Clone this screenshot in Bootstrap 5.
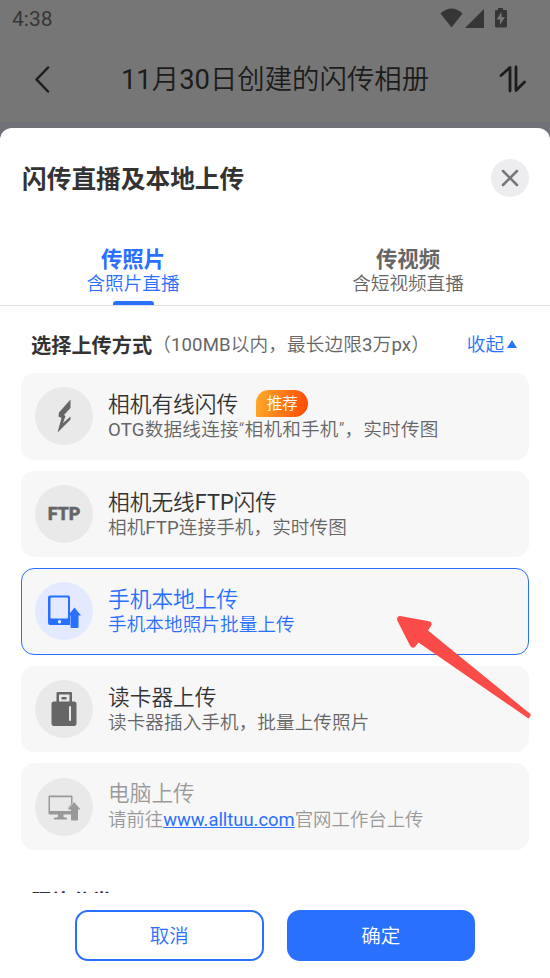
<!DOCTYPE html>
<html lang="zh-CN">
<head>
<meta charset="utf-8">
<meta name="viewport" content="width=device-width, initial-scale=1">
<title>闪传直播及本地上传</title>
<link rel="stylesheet" href="https://cdn.jsdelivr.net/npm/bootstrap@5.3.0/dist/css/bootstrap.min.css">
<style>
:root{--brand:#2970ff;--ink:#333;--soft:#666}
body{font-family:Roboto,"Noto Sans CJK SC",sans-serif;font-weight:350;background:#707178;height:978px;color:var(--ink)}
svg{display:block;flex:none}
b{font-weight:700}
i{font-style:normal;font-weight:400}
.topbar{background:#767676;height:122px;color:#1c1c1c}
.status{height:38px;padding:0 42px 0 12px;color:#363636;font-size:21px;font-weight:450;line-height:38px}
.titlebar{height:82px;padding:0 24px 0 33px}
.page-title{font-size:27.4px;line-height:40px;font-weight:350;padding-top:2px}
.sheet{margin-top:6px;height:850px;border-radius:12px 12px 0 0}
.sheet-head{height:99px;padding:0 21px 0 22px}
.sheet-title{font-size:24.7px;line-height:36px;font-weight:700;padding-top:5px}
.round-close{width:38px;height:38px;background:#ededf0}
.tabs{height:79px;border-bottom:1.5px solid #dee0e8}
.tab-item{padding:20px 9px 0 0;color:var(--soft);text-align:center}
.tab-item b{display:block;font-size:21.4px;line-height:25px}
.tab-item span{display:block;font-size:18.6px;line-height:24px}
.tab-item.on{color:var(--brand)}
.tab-item.on::after{content:"";display:block;width:41px;height:4px;margin:5px auto 0;background:var(--brand);border-radius:3px 3px 0 0}
.list-area{height:587px;padding:0 21px}
.section-head{height:67px;padding:13px 12px 0 10px}
.section-head b{font-size:20.2px}
.section-head span{font-size:18.6px;letter-spacing:.15px;color:var(--soft)}
.fold{font-size:18.6px;color:var(--brand);gap:3px}
.options{gap:11px}
.option{height:86.6px;background:#f7f7f7;border:1.5px solid #f7f7f7;border-radius:13px;padding-left:13px;gap:15px}
.option-icon{width:58px;height:58px;background:#e9e9e9;color:var(--soft);flex:none}
.option-text{padding-top:3px}
.option-name{font-size:21.7px;line-height:26px}
.option-desc{font-size:18.6px;line-height:25px;letter-spacing:.07px;color:var(--soft);white-space:nowrap}
.option-desc.wide{letter-spacing:.22px}
.option.on{border-color:var(--brand)}
.option.on .option-name,.option.on .option-desc,.option.on .option-icon{color:var(--brand)}
.option.on .option-icon{background:#e3eaff}
.option.off .option-name,.option.off .option-desc,.option.off .option-icon{color:#999}
.option.off .option-text{padding-top:0}
.option.off .option-desc{font-size:18.4px;letter-spacing:0}
.option-desc a{color:var(--brand);font-weight:400}
.ftp{font:900 18px/1 Roboto,sans-serif;letter-spacing:-.2px;-webkit-text-stroke:.3px currentColor}
.tag{width:52px;height:27px;margin:-4px 0 0 18px;font-size:15.5px;padding-top:2px;color:#fff;border-radius:13px 14px 14px 1px;background:linear-gradient(100deg,#ffac2b,#ff4800)}
.next-title{font-size:20.2px;font-weight:700;line-height:24px;padding:40px 0 0 10px}
.actions{padding-top:17px;gap:23px}
.action{width:188.5px;height:51px;font-size:19.5px;font-weight:350;border:2px solid var(--brand);border-radius:13px;padding:2px 0 0;color:var(--brand)}
.action.go{background:var(--brand);color:#fff}
.pointer{left:390px;top:608px}
</style>
</head>
<body class="m-0 overflow-hidden position-relative">
<header class="topbar">
  <div class="status d-flex justify-content-between">
    <span>4:38</span>
    <svg width="68" height="38" viewBox="0 0 68 38" fill="#363636"><path d="M0.500 13.500Q11.500 3.500 22.500 13.500L11.500 27.500Z"/><path d="M25 28L44 9V28Z"/><path fill-rule="evenodd" d="M58 8h5v2h3q1 0 1 1v15q0 1.500-1.500 1.500h-9Q55 27.500 55 26V11q0-1 1-1h2ZM61.500 12l-5 7.500h3.500v5.500l5-8h-3.500Z"/></svg>
  </div>
  <div class="titlebar d-flex align-items-center justify-content-between">
    <svg width="18" height="28" viewBox="0 0 18 28" fill="none" stroke="#1c1c1c" stroke-width="2.500" stroke-linecap="round" stroke-linejoin="round"><path d="M15 2.500L3.500 14.500L15 26.500"/></svg>
    <h1 class="page-title mb-0"><i>11</i>月<i>30</i>日创建的闪传相册</h1>
    <svg width="27" height="28" viewBox="0 0 27 28" fill="none" stroke="#1c1c1c" stroke-width="2.800" stroke-linecap="round" stroke-linejoin="round"><path d="M2 10.500L11 2.500V26M17 2V25.500L25.500 17"/></svg>
  </div>
</header>
<main class="sheet bg-white d-flex flex-column">
  <div class="sheet-head d-flex align-items-center justify-content-between">
    <h2 class="sheet-title mb-0">闪传直播及本地上传</h2>
    <button class="round-close btn p-0 border-0 rounded-circle d-flex align-items-center justify-content-center" aria-label="关闭"><svg width="18" height="18" viewBox="0 0 18 18" stroke="#77777a" stroke-width="2.500" stroke-linecap="round"><path d="M2 2L16 16M16 2L2 16"/></svg></button>
  </div>
  <nav class="tabs row g-0">
    <div class="tab-item on col-6"><b>传照片</b><span>含照片直播</span></div>
    <div class="tab-item col-6"><b>传视频</b><span>含短视频直播</span></div>
  </nav>
  <section class="list-area overflow-hidden">
    <div class="section-head d-flex align-items-center">
      <b>选择上传方式</b><span>（<i>100MB</i>以内，最长边限<i>3</i>万<i>px</i>）</span>
      <div class="fold ms-auto d-flex align-items-center">收起<svg width="10" height="8" viewBox="0 0 10 8" fill="#2970ff" class="mb-1"><path d="M5 0L10 8H0Z"/></svg></div>
    </div>
    <div class="options d-flex flex-column">
      <div class="option d-flex align-items-center">
        <div class="option-icon rounded-circle d-flex align-items-center justify-content-center"><svg width="58" height="58" viewBox="0 0 58 58" fill="currentColor"><path d="M35.500 12.500L24 25.500L23.500 29.500L26.500 31L22.500 45.500L35.500 32.500V29.500L28 36L30.500 29L29 28L35.500 21Z"/></svg></div>
        <div class="option-text"><div class="option-name d-flex align-items-center">相机有线闪传<span class="tag d-flex align-items-center justify-content-center">推荐</span></div><div class="option-desc wide"><i>OTG</i>数据线连接“相机和手机”，实时传图</div></div>
      </div>
      <div class="option d-flex align-items-center">
        <div class="option-icon rounded-circle d-flex align-items-center justify-content-center"><span class="ftp">FTP</span></div>
        <div class="option-text"><div class="option-name">相机无线<i>FTP</i>闪传</div><div class="option-desc">相机<i>FTP</i>连接手机，实时传图</div></div>
      </div>
      <div class="option on d-flex align-items-center">
        <div class="option-icon rounded-circle d-flex align-items-center justify-content-center"><svg width="58" height="58" viewBox="0 0 58 58" fill="currentColor"><path fill-rule="evenodd" d="M15 13.500h18q2 0 2 2V27l-2 2.500V16.500q0-1-1-1H16.500q-1 0-1 1V35.500q0 1 1 1H32q1 0 1-1v-2h2V43H15q-2 0-2-2V15.500q0-2 2-2ZM24.500 38a1.700 1.700 0 1 0 .1 0Z"/><path d="M33 15v20h2V15Z"/><path d="M39.500 25.500L46 33.500H43.500V45q0 1-1 1h-6q-1 0-1-1V33.500H33Z"/></svg></div>
        <div class="option-text"><div class="option-name">手机本地上传</div><div class="option-desc">手机本地照片批量上传</div></div>
      </div>
      <div class="option d-flex align-items-center">
        <div class="option-icon rounded-circle d-flex align-items-center justify-content-center"><svg width="58" height="58" viewBox="0 0 58 58" fill="currentColor"><path fill-rule="evenodd" d="M22.500 12h13.500q1 0 1 1v8.500h2q2.500 0 2.500 2.500v19q0 3-2.500 3H19q-2.500 0-2.500-3V24q0-2.500 2.500-2.500h2.500V13q0-1 1-1ZM24 14.500v7h10.500v-7ZM26.500 17h5v2.500h-5ZM35 26q-1 0-1 1v13q0 1 1 1t1-1V27q0-1-1-1Z"/></svg></div>
        <div class="option-text"><div class="option-name">读卡器上传</div><div class="option-desc">读卡器插入手机，批量上传照片</div></div>
      </div>
      <div class="option off d-flex align-items-center">
        <div class="option-icon rounded-circle d-flex align-items-center justify-content-center"><svg width="58" height="58" viewBox="0 0 58 58" fill="currentColor"><path fill-rule="evenodd" d="M14.500 17.500H36.500q1 0 1 1V25L33 31v2h3v3.500H28.500v2.500l3.500 1v1.500H19V40l4-1V36.500H14.500q-1 0-1-1v-17q0-1 1-1ZM15 19.200V33H33v-3l3-4V19.200Z"/><path d="M39 24L45.500 31.500H43V41.500q0 1-1 1h-5q-1 0-1-1V31.500H33Z"/></svg></div>
        <div class="option-text"><div class="option-name">电脑上传</div><div class="option-desc">请前往<a href="#">www.alltuu.com</a>官网工作台上传</div></div>
      </div>
    </div>
    <div class="next-title">照片分类</div>
  </section>
  <footer class="actions d-flex justify-content-center">
    <button class="action btn">取消</button>
    <button class="action go btn">确定</button>
  </footer>
</main>
<svg class="pointer position-absolute" width="144" height="114" viewBox="390 608 144 114" fill="#fa4b48"><path d="M400 616L429 621.300Q433 622.500 431 626L428 630.500L531 714.500Q530 717 528.500 718.500L418.500 642.500L415 647Q412 649 410 645.500L397.500 621Q396 616.500 400 616Z"/></svg>
<script src="https://cdn.jsdelivr.net/npm/bootstrap@5.3.0/dist/js/bootstrap.bundle.min.js"></script>
</body>
</html>
